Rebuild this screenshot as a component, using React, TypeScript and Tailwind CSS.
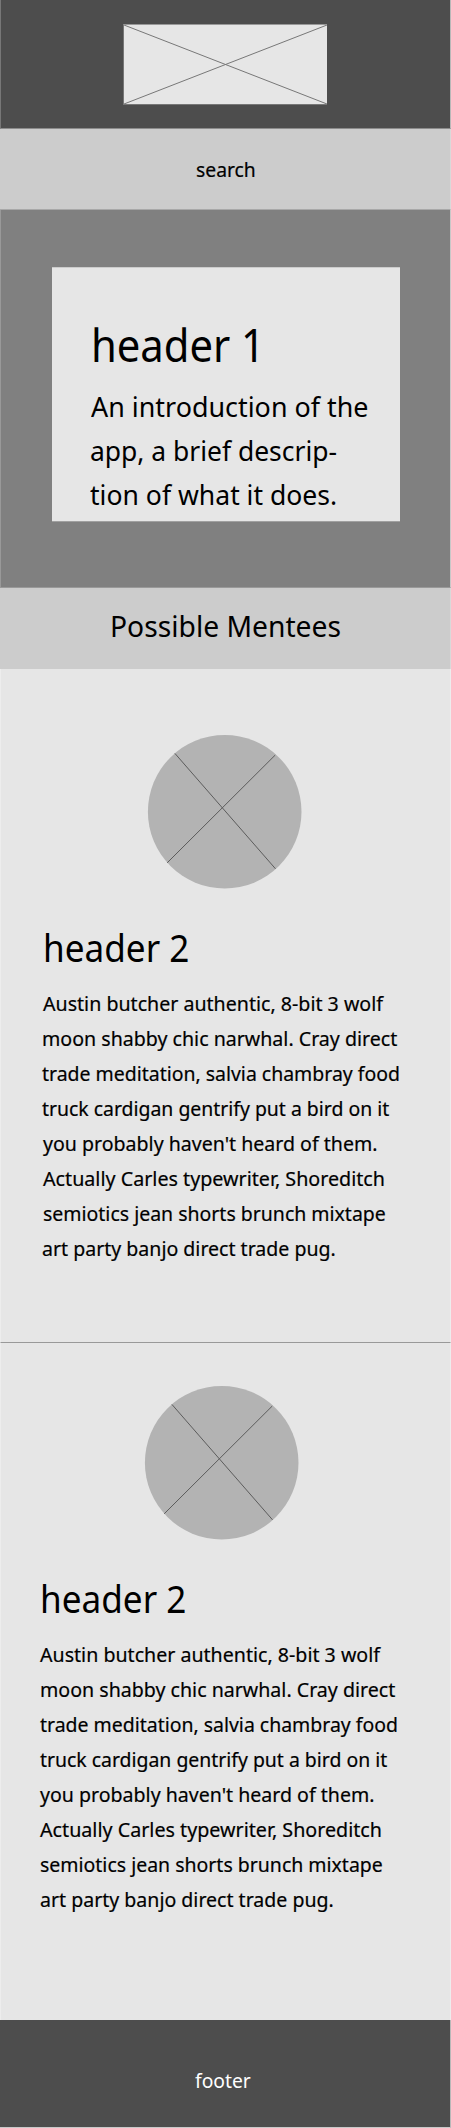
import { useLayoutEffect, useRef, useState } from "react";

type FitProps = { text: string; width: number; inset?: number };

// Sets one line of type to an exact measure by condensing it horizontally.
function FitLine({ text, width, inset = 0 }: FitProps) {
  const ref = useRef<HTMLSpanElement>(null);
  const [scale, setScale] = useState(1);
  useLayoutEffect(() => {
    const el = ref.current;
    if (!el) return;
    const shown = el.getBoundingClientRect().width;
    if (shown > 0) setScale((s) => (width * s) / shown);
  }, [width, text]);
  return (
    <span className="block" style={{ paddingLeft: inset }}>
      <span
        ref={ref}
        className="inline-block origin-left align-top whitespace-nowrap"
        style={{ transform: `scaleX(${scale})` }}
      >
        {text}
      </span>
    </span>
  );
}

const intro: FitProps[] = [
  { text: "An introduction of the", width: 277.5, inset: 0.6 },
  { text: "app, a brief descrip-", width: 247 },
  { text: "tion of what it does.", width: 247.2, inset: 0.4 },
];

const bio: FitProps[] = [
  { text: "Austin butcher authentic, 8-bit 3 wolf", width: 340, inset: 0.8 },
  { text: "moon shabby chic narwhal. Cray direct", width: 355.3, inset: 0.3 },
  { text: "trade meditation, salvia chambray food", width: 358, inset: 0.4 },
  { text: "truck cardigan gentrify put a bird on it", width: 347.2, inset: 0.4 },
  { text: "you probably haven't heard of them.", width: 334.5, inset: 0.5 },
  { text: "Actually Carles typewriter, Shoreditch", width: 342, inset: 0.8 },
  { text: "semiotics jean shorts brunch mixtape", width: 342.8, inset: 0.5 },
  { text: "art party banjo direct trade pug.", width: 293.8, inset: 0.4 },
];

function Avatar() {
  return (
    <svg width="155" height="155" viewBox="0 0 155 155" className="ml-[105px] block">
      <circle cx="77.7" cy="77.7" r="76.8" fill="#b3b3b3" />
      <path d="M27.9 19.4 128.5 134.8M128.2 21.1 20.2 128.8" stroke="#5c5c5c" strokeWidth="1" fill="none" />
    </svg>
  );
}

function Mentee() {
  return (
    <>
      <Avatar />
      <h2 className="mt-[35px] text-[37.5px] leading-[48px]">
        <FitLine text="header 2" width={146.4} inset={0.5} />
      </h2>
      <p className="mt-[14px] text-[20.5px] leading-[35px] [-webkit-text-stroke:0.2px_currentColor]">
        {bio.map((line) => (
          <FitLine key={line.text} {...line} />
        ))}
      </p>
    </>
  );
}

export default function App() {
  return (
    <div className="flex h-[2128px] w-[451px] flex-col overflow-hidden bg-[#e6e6e6] font-['Noto_Sans',sans-serif] text-black">
      <header className="flex h-[129px] shrink-0 border-x border-b border-r-[#b8b8b8] border-b-[#8c8c8c] border-l-[#777] bg-[#4d4d4d] pt-6 pl-[122px]">
        <div className="h-[81px] w-[204px] border-y border-l border-t-[#999] border-b-[#777] border-l-[#777] bg-[#e6e6e6]">
          <svg width="203" height="79" viewBox="0 0 203 79" className="block">
            <path d="M0 0 203 79M0 79 203 0" stroke="#777" strokeWidth="1" fill="none" />
          </svg>
        </div>
      </header>

      <div className="h-[81px] shrink-0 border-r border-b border-r-[#d9d9d9] border-b-[#a8a8a8] bg-[#ccc] pt-[23px] pl-[195.7px] text-[20.5px] leading-[35px] [-webkit-text-stroke:0.2px_currentColor]">
        <FitLine text="search" width={59.8} />
      </div>

      <section className="h-[378px] shrink-0 border-x border-b border-r-[#c8c8c8] border-b-[#999] border-l-[#999] bg-[#808080] pt-[57px] pl-[51px]">
        <div className="h-[255px] w-[348px] border-y border-t-[#ccc] border-b-[#a0a0a0] bg-[#e6e6e6] pt-[46px] pl-[38px]">
          <h1 className="text-[45.5px] leading-[60px]">
            <FitLine text="header 1" width={174} inset={0.8} />
          </h1>
          <p className="mt-[10px] text-[28px] leading-[44px]">
            {intro.map((line) => (
              <FitLine key={line.text} {...line} />
            ))}
          </p>
        </div>
      </section>

      <div className="h-[81px] shrink-0 border-r border-r-[#d9d9d9] bg-[#ccc] pt-[14px] pl-[110.2px] text-[29.5px] leading-[48px]">
        <FitLine text="Possible Mentees" width={231} />
      </div>

      <article className="h-[674px] shrink-0 border-x border-b border-x-[#ededed] border-b-[#999] pt-[65px] pl-[41px]">
        <Mentee />
      </article>

      <article className="h-[677px] shrink-0 border-x border-x-[#ededed] pt-[42px] pl-[38.3px]">
        <Mentee />
      </article>

      <footer className="h-[108px] shrink-0 border-r border-b border-r-[#b8b8b8] border-b-[#c8c8c8] bg-[#4d4d4d] pt-[43px] pl-[195px] text-[20.5px] leading-[35px] text-white">
        <FitLine text="footer" width={55.8} />
      </footer>
    </div>
  );
}
